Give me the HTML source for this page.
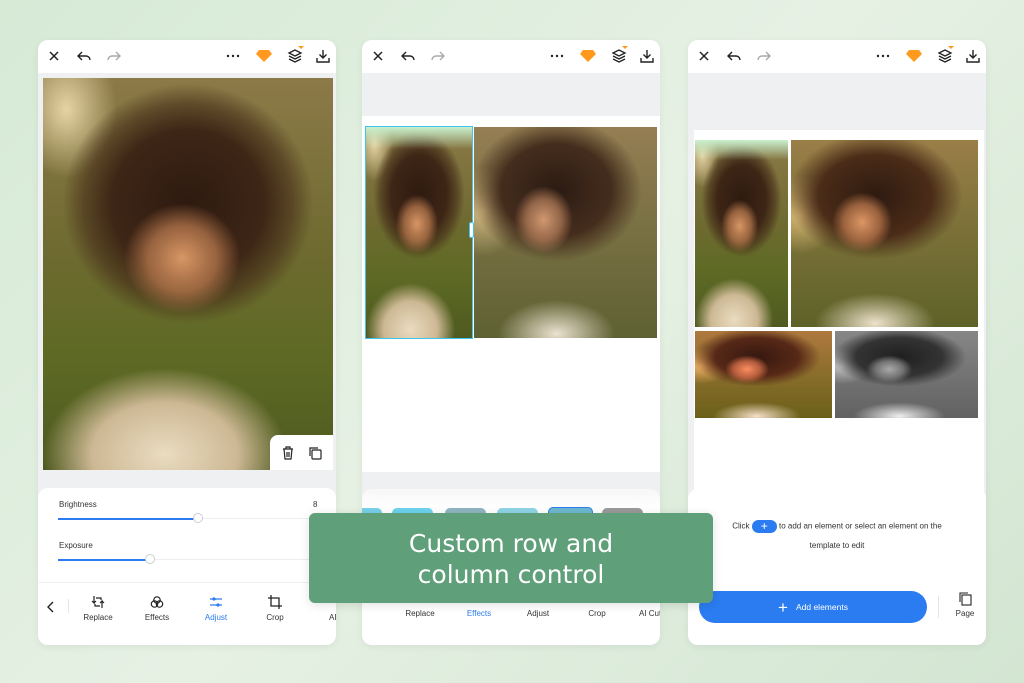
<!DOCTYPE html>
<html><head><meta charset="utf-8">
<style>
*{margin:0;padding:0;box-sizing:border-box}
body{width:1024px;height:683px;overflow:hidden;position:relative;font-family:"Liberation Sans",sans-serif;background:linear-gradient(135deg,#d6ead6 0%,#e6f1e4 50%,#d3e6d2 100%)}
.panel{position:absolute;top:40px;width:298px;height:605px;background:#eff0f2;border-radius:10px;overflow:hidden;box-shadow:0 2px 8px rgba(0,0,0,.06)}
.hdr{position:absolute;left:0;top:0;width:100%;height:33px;background:#fff}
.hdr svg{position:absolute;top:9px}
.photo{position:absolute;overflow:hidden;
background:
radial-gradient(ellipse 20% 14% at 48% 46%,rgba(215,150,100,1),rgba(190,125,80,.7) 60%,transparent 100%),
radial-gradient(ellipse 48% 34% at 50% 32%,#2e1a10 0%,#3e2616 55%,rgba(70,45,25,.6) 75%,transparent 90%),
radial-gradient(ellipse 42% 22% at 42% 96%,#eadcc0 0%,#cdb894 60%,transparent 100%),
radial-gradient(ellipse 25% 25% at 8% 8%,rgba(255,235,190,.8),transparent 70%),
linear-gradient(180deg,#8c7a48 0%,#6e6a30 45%,#5e6a24 70%,#4e5a20 100%)}
.photo.warm{background:
radial-gradient(ellipse 16% 16% at 38% 44%,rgba(220,150,100,1),rgba(195,125,80,.7) 60%,transparent 100%),
radial-gradient(ellipse 55% 40% at 45% 30%,#2e1a10 0%,#4a2c18 55%,transparent 85%),
radial-gradient(ellipse 32% 16% at 45% 98%,#eee2cc,transparent 100%),
radial-gradient(ellipse 30% 30% at 5% 40%,rgba(255,215,140,.7),transparent 70%),
linear-gradient(180deg,#9a7e48 0%,#7a7038 50%,#5e6228 100%)}
.photo.gray{filter:grayscale(1) brightness(1.05)}
.sheet{position:absolute;left:0;width:100%;background:#fff;border-radius:10px 10px 0 0}
.lbl{position:absolute;font-size:8px;color:#333}
.tb{position:absolute;left:0;width:100%;height:64px;border-top:1px solid #f0f0f0}
.tool{position:absolute;top:12px;width:60px;text-align:center;font-size:8px;color:#333}
.tool svg{display:block;margin:0 auto 4px}
.ai{position:absolute;left:291px;font-size:8px;color:#333;white-space:nowrap}
.banner{position:absolute;left:309px;top:513px;width:404px;height:90px;background:#5f9f7a;border-radius:6px;color:#fff;font-family:"DejaVu Sans","Liberation Sans",sans-serif;font-size:25px;line-height:31px;text-align:center;padding-top:15px;box-shadow:0 2px 10px rgba(0,0,0,.12)}
</style></head><body>

<div class="panel" style="left:38px">
 <div class="hdr">
  <svg style="left:9px" width="14" height="14" viewBox="0 0 14 14"><path d="M3 3l8 8M11 3l-8 8" stroke="#222" stroke-width="1.5"/></svg>
  <svg style="left:38px" width="16" height="14" viewBox="0 0 16 14"><path d="M6 3L2 7l4 4M2 7h8a4 4 0 014 4" stroke="#222" stroke-width="1.4" fill="none"/></svg>
  <svg style="left:68px" width="16" height="14" viewBox="0 0 16 14"><path d="M10 3l4 4-4 4M14 7H6a4 4 0 00-4 4" stroke="#aaa" stroke-width="1.4" fill="none"/></svg>
  <svg style="left:188px" width="14" height="14" viewBox="0 0 14 14"><circle cx="2" cy="7" r="1.2" fill="#222"/><circle cx="7" cy="7" r="1.2" fill="#222"/><circle cx="12" cy="7" r="1.2" fill="#222"/></svg>
  <svg style="left:217px" width="18" height="14" viewBox="0 0 18 14"><path d="M4 1h10l3 4-8 8-8-8z" fill="#ff9a1f"/></svg>
  <svg style="left:248px;top:6px" width="18" height="18" viewBox="0 0 18 18"><path d="M3 7l6-3 6 3-6 3z M3 10l6 3 6-3 M3 13l6 3 6-3" stroke="#222" stroke-width="1.3" fill="none"/><path d="M12 0h6l-3 3z" fill="#ff9a1f"/></svg>
  <svg style="left:278px" width="14" height="14" viewBox="0 0 14 14"><path d="M7 1v8M3.5 5.5L7 9l3.5-3.5M1 9v4h12V9" stroke="#222" stroke-width="1.4" fill="none"/></svg>
 </div>
 <div class="photo" style="left:5px;top:38px;width:290px;height:392px"></div>
 <div style="position:absolute;left:232px;top:395px;width:63px;height:35px;background:#fff;border-radius:8px 0 0 0">
  <svg style="position:absolute;left:12px;top:11px" width="12" height="14" viewBox="0 0 12 14"><path d="M1 3h10M4 3V1h4v2M2 3l1 10h6l1-10M5 6v5M7 6v5" stroke="#222" stroke-width="1.2" fill="none"/></svg>
  <svg style="position:absolute;left:38px;top:11px" width="14" height="14" viewBox="0 0 14 14"><rect x="4" y="4" width="9" height="9" rx="1" stroke="#222" stroke-width="1.2" fill="none"/><path d="M2 10V2h8" stroke="#222" stroke-width="1.2" fill="none"/></svg>
 </div>
 <div class="sheet" style="top:448px;height:157px">
  <div class="lbl" style="left:21px;top:12px">Brightness</div>
  <div class="lbl" style="left:275px;top:12px">8</div>
  <div style="position:absolute;left:20px;top:30px;width:262px;height:1px;background:#eee"></div>
  <div style="position:absolute;left:20px;top:29.5px;width:140px;height:2px;background:#2b7cf0"></div>
  <div style="position:absolute;left:155px;top:25px;width:10px;height:10px;border-radius:50%;background:#fff;border:1px solid #ccc"></div>
  <div class="lbl" style="left:21px;top:53px">Exposure</div>
  <div style="position:absolute;left:20px;top:71px;width:262px;height:1px;background:#eee"></div>
  <div style="position:absolute;left:20px;top:70.5px;width:92px;height:2px;background:#2b7cf0"></div>
  <div style="position:absolute;left:107px;top:66px;width:10px;height:10px;border-radius:50%;background:#fff;border:1px solid #ccc"></div>
  <div class="tb" style="top:94px">
   <svg style="position:absolute;left:9px;top:18px" width="8" height="12" viewBox="0 0 8 12"><path d="M6 1L1 6l5 5" stroke="#222" stroke-width="1.4" fill="none"/></svg>
   <div style="position:absolute;left:30px;top:16px;width:1px;height:14px;background:#e5e5e5"></div>
   <div class="tool" style="left:30px"><svg width="14" height="14" viewBox="0 0 14 14"><path d="M3 1v7l-2-2M3 8l2-2M11 13V6l-2 2M11 6l2 2M5 3h5v2M9 11H4V9" stroke="#222" stroke-width="1.2" fill="none"/></svg>Replace</div>
   <div class="tool" style="left:89px"><svg width="14" height="14" viewBox="0 0 14 14"><circle cx="7" cy="5" r="3.2" stroke="#222" stroke-width="1.2" fill="none"/><circle cx="4.5" cy="9" r="3.2" stroke="#222" stroke-width="1.2" fill="none"/><circle cx="9.5" cy="9" r="3.2" stroke="#222" stroke-width="1.2" fill="none"/></svg>Effects</div>
   <div class="tool" style="left:148px;color:#2b7cf0"><svg width="14" height="14" viewBox="0 0 14 14"><path d="M1 4h12M1 10h12" stroke="#2b7cf0" stroke-width="1.2"/><circle cx="5" cy="4" r="1.6" fill="#2b7cf0"/><circle cx="9" cy="10" r="1.6" fill="#2b7cf0"/></svg>Adjust</div>
   <div class="tool" style="left:207px"><svg width="14" height="14" viewBox="0 0 14 14"><path d="M3 0v11h11M0 3h11v11" stroke="#222" stroke-width="1.3" fill="none"/></svg>Crop</div>
   <div class="ai" style="top:30px">AI Cut</div>
  </div>
 </div>
</div>

<div class="panel" style="left:362px">
 <div class="hdr">
  <svg style="left:9px" width="14" height="14" viewBox="0 0 14 14"><path d="M3 3l8 8M11 3l-8 8" stroke="#222" stroke-width="1.5"/></svg>
  <svg style="left:38px" width="16" height="14" viewBox="0 0 16 14"><path d="M6 3L2 7l4 4M2 7h8a4 4 0 014 4" stroke="#222" stroke-width="1.4" fill="none"/></svg>
  <svg style="left:68px" width="16" height="14" viewBox="0 0 16 14"><path d="M10 3l4 4-4 4M14 7H6a4 4 0 00-4 4" stroke="#aaa" stroke-width="1.4" fill="none"/></svg>
  <svg style="left:188px" width="14" height="14" viewBox="0 0 14 14"><circle cx="2" cy="7" r="1.2" fill="#222"/><circle cx="7" cy="7" r="1.2" fill="#222"/><circle cx="12" cy="7" r="1.2" fill="#222"/></svg>
  <svg style="left:217px" width="18" height="14" viewBox="0 0 18 14"><path d="M4 1h10l3 4-8 8-8-8z" fill="#ff9a1f"/></svg>
  <svg style="left:248px;top:6px" width="18" height="18" viewBox="0 0 18 18"><path d="M3 7l6-3 6 3-6 3z M3 10l6 3 6-3 M3 13l6 3 6-3" stroke="#222" stroke-width="1.3" fill="none"/><path d="M12 0h6l-3 3z" fill="#ff9a1f"/></svg>
  <svg style="left:278px" width="14" height="14" viewBox="0 0 14 14"><path d="M7 1v8M3.5 5.5L7 9l3.5-3.5M1 9v4h12V9" stroke="#222" stroke-width="1.4" fill="none"/></svg>
 </div>
 <div style="position:absolute;left:0;top:76px;width:298px;height:356px;background:#fff"></div>
 <div class="photo" style="left:4px;top:87px;width:106px;height:211px"></div>
 <div style="position:absolute;left:4px;top:87px;width:106px;height:22px;background:linear-gradient(#c8f0cc,rgba(200,240,204,0))"></div>
 <div style="position:absolute;left:3px;top:86px;width:108px;height:213px;border:1.5px solid #3fc6f0"></div>
 <div style="position:absolute;left:107px;top:182px;width:5px;height:16px;background:#fff;border:1px solid #3fc6f0;border-radius:2px"></div>
 <div class="photo warm" style="left:112px;top:87px;width:183px;height:211px;filter:saturate(.8)"></div>
 <div class="sheet" style="top:449px;height:156px;background:linear-gradient(#f7f7f8,#fff 20px)">
  <div style="position:absolute;left:-20px;top:19px;width:40px;height:45px;background:#78d0e8;border-radius:5px"></div>
  <div style="position:absolute;left:30px;top:19px;width:41px;height:45px;background:#6dd3ee;border-radius:5px"></div>
  <div style="position:absolute;left:83px;top:19px;width:41px;height:45px;background:#8fb5c0;border-radius:5px"></div>
  <div style="position:absolute;left:135px;top:19px;width:41px;height:45px;background:#8fd4e6;border-radius:5px"></div>
  <div style="position:absolute;left:186px;top:18px;width:45px;height:47px;background:#6cb8d0;border:1.5px solid #2b7cf0;border-radius:5px"></div>
  <div style="position:absolute;left:240px;top:19px;width:41px;height:45px;background:#9a9a9a;border-radius:5px"></div>
  <div class="tb" style="top:93px">
   <div class="tool" style="left:28px;top:26px">Replace</div>
   <div class="tool" style="left:87px;top:26px;color:#2b7cf0">Effects</div>
   <div class="tool" style="left:146px;top:26px">Adjust</div>
   <div class="tool" style="left:205px;top:26px">Crop</div>
   <div class="ai" style="left:277px;top:26px">AI Cut</div>
  </div>
 </div>
</div>

<div class="panel" style="left:688px">
 <div class="hdr">
  <svg style="left:9px" width="14" height="14" viewBox="0 0 14 14"><path d="M3 3l8 8M11 3l-8 8" stroke="#222" stroke-width="1.5"/></svg>
  <svg style="left:38px" width="16" height="14" viewBox="0 0 16 14"><path d="M6 3L2 7l4 4M2 7h8a4 4 0 014 4" stroke="#222" stroke-width="1.4" fill="none"/></svg>
  <svg style="left:68px" width="16" height="14" viewBox="0 0 16 14"><path d="M10 3l4 4-4 4M14 7H6a4 4 0 00-4 4" stroke="#aaa" stroke-width="1.4" fill="none"/></svg>
  <svg style="left:188px" width="14" height="14" viewBox="0 0 14 14"><circle cx="2" cy="7" r="1.2" fill="#222"/><circle cx="7" cy="7" r="1.2" fill="#222"/><circle cx="12" cy="7" r="1.2" fill="#222"/></svg>
  <svg style="left:217px" width="18" height="14" viewBox="0 0 18 14"><path d="M4 1h10l3 4-8 8-8-8z" fill="#ff9a1f"/></svg>
  <svg style="left:248px;top:6px" width="18" height="18" viewBox="0 0 18 18"><path d="M3 7l6-3 6 3-6 3z M3 10l6 3 6-3 M3 13l6 3 6-3" stroke="#222" stroke-width="1.3" fill="none"/><path d="M12 0h6l-3 3z" fill="#ff9a1f"/></svg>
  <svg style="left:278px" width="14" height="14" viewBox="0 0 14 14"><path d="M7 1v8M3.5 5.5L7 9l3.5-3.5M1 9v4h12V9" stroke="#222" stroke-width="1.4" fill="none"/></svg>
 </div>
 <div style="position:absolute;left:6px;top:90px;width:290px;height:515px;background:#fff"></div>
 <div class="photo" style="left:7px;top:100px;width:93px;height:187px"></div>
 <div style="position:absolute;left:7px;top:100px;width:93px;height:20px;background:linear-gradient(#c8f0cc,rgba(200,240,204,0))"></div>
 <div class="photo warm" style="left:103px;top:100px;width:187px;height:187px"></div>
 <div class="photo warm" style="left:7px;top:291px;width:137px;height:87px;filter:saturate(1.3) hue-rotate(-10deg)"></div>
 <div class="photo warm gray" style="left:147px;top:291px;width:143px;height:87px"></div>
 <div class="sheet" style="top:449px;height:156px">
  <div style="position:absolute;left:0;top:31px;width:100%;text-align:center;font-size:8px;color:#333">Click <span style="display:inline-block;width:25px;height:13px;border-radius:7px;background:#2b7cf0;color:#fff;font-size:12px;line-height:12px;vertical-align:middle">+</span> to add an element or select an element on the</div>
  <div style="position:absolute;left:0;top:52px;width:100%;text-align:center;font-size:8px;color:#333">template to edit</div>
  <div style="position:absolute;left:11px;top:102px;width:228px;height:32px;border-radius:16px;background:#2b7cf0;color:#fff;font-size:8.5px;text-align:center;line-height:32px"><span style="font-size:17px;vertical-align:middle;margin-right:8px">+</span>Add elements</div>
  <div style="position:absolute;left:250px;top:107px;width:1px;height:22px;background:#e5e5e5"></div>
  <svg style="position:absolute;left:270px;top:102px" width="14" height="15" viewBox="0 0 14 15"><rect x="4" y="4" width="9" height="10" stroke="#222" stroke-width="1.1" fill="none"/><path d="M2 11V2h8" stroke="#222" stroke-width="1.1" fill="none"/></svg>
  <div style="position:absolute;left:262px;top:120px;width:30px;text-align:center;font-size:8px;color:#333">Page</div>
 </div>
</div>

<div class="banner">Custom row and<br>column control</div>
</body></html>
